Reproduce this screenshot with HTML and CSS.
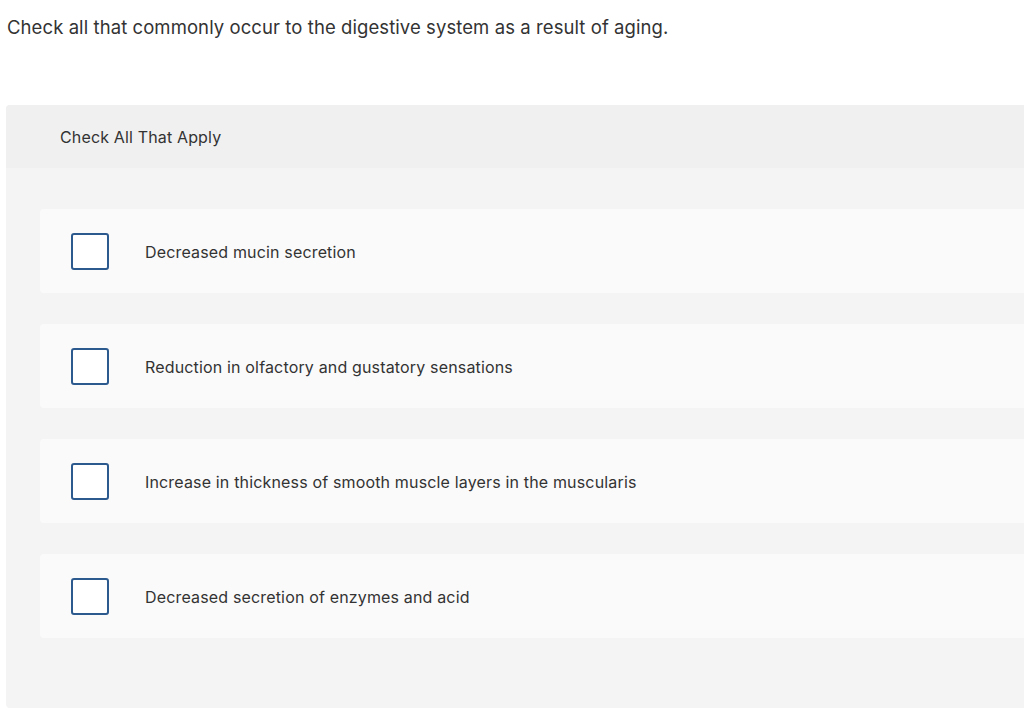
FILE: index.html
```html
<!DOCTYPE html>
<html lang="en">
<head>
<meta charset="utf-8">
<title>Check All That Apply</title>
<link rel="stylesheet" href="styles.css">
</head>
<body>
<p class="question">Check all that commonly occur to the digestive system as a result of aging.</p>
<section class="panel">
  <header class="panel-head">Check All That Apply</header>
  <div class="options">
    <label class="option"><span class="box"></span><span class="label">Decreased mucin secretion</span></label>
    <label class="option"><span class="box"></span><span class="label">Reduction in olfactory and gustatory sensations</span></label>
    <label class="option"><span class="box"></span><span class="label">Increase in thickness of smooth muscle layers in the muscularis</span></label>
    <label class="option"><span class="box"></span><span class="label">Decreased secretion of enzymes and acid</span></label>
  </div>
</section>
</body>
</html>
```
FILE: styles.css
```css
html, body {
  margin: 0;
  padding: 0;
  background: #ffffff;
  overflow: hidden;
}
body {
  font-family: "Inter", "Liberation Sans", sans-serif;
  color: #333333;
}
.question {
  margin: 0;
  padding: 14px 0 0 7px;
  font-size: 18.5px;
  line-height: 26px;
  letter-spacing: 0.08px;
}
.panel {
  margin: 65px 0 0 6px;
  height: 603px;
  background: #f4f4f4;
  border-radius: 4px 0 0 4px;
  overflow: hidden;
}
.panel-head {
  height: 63px;
  background: #f0f0f0;
  display: flex;
  align-items: center;
  padding-left: 54px;
  font-size: 16px;
  letter-spacing: 0.15px;
  padding-top: 1px;
  box-sizing: border-box;
}
.options {
  display: flex;
  flex-direction: column;
  gap: 31px;
  padding: 41px 0 0 34px;
}
.option {
  height: 84px;
  background: #fafafa;
  border-radius: 4px 0 0 4px;
  display: flex;
  align-items: center;
  padding-left: 31px;
}
.box {
  box-sizing: border-box;
  width: 38px;
  height: 37px;
  border: 2.5px solid #2d5a8e;
  border-radius: 3px;
  background: #ffffff;
  flex: none;
}
.label {
  margin-left: 36px;
  font-size: 16px;
  letter-spacing: 0.16px;
  padding-top: 1px;
}
```
